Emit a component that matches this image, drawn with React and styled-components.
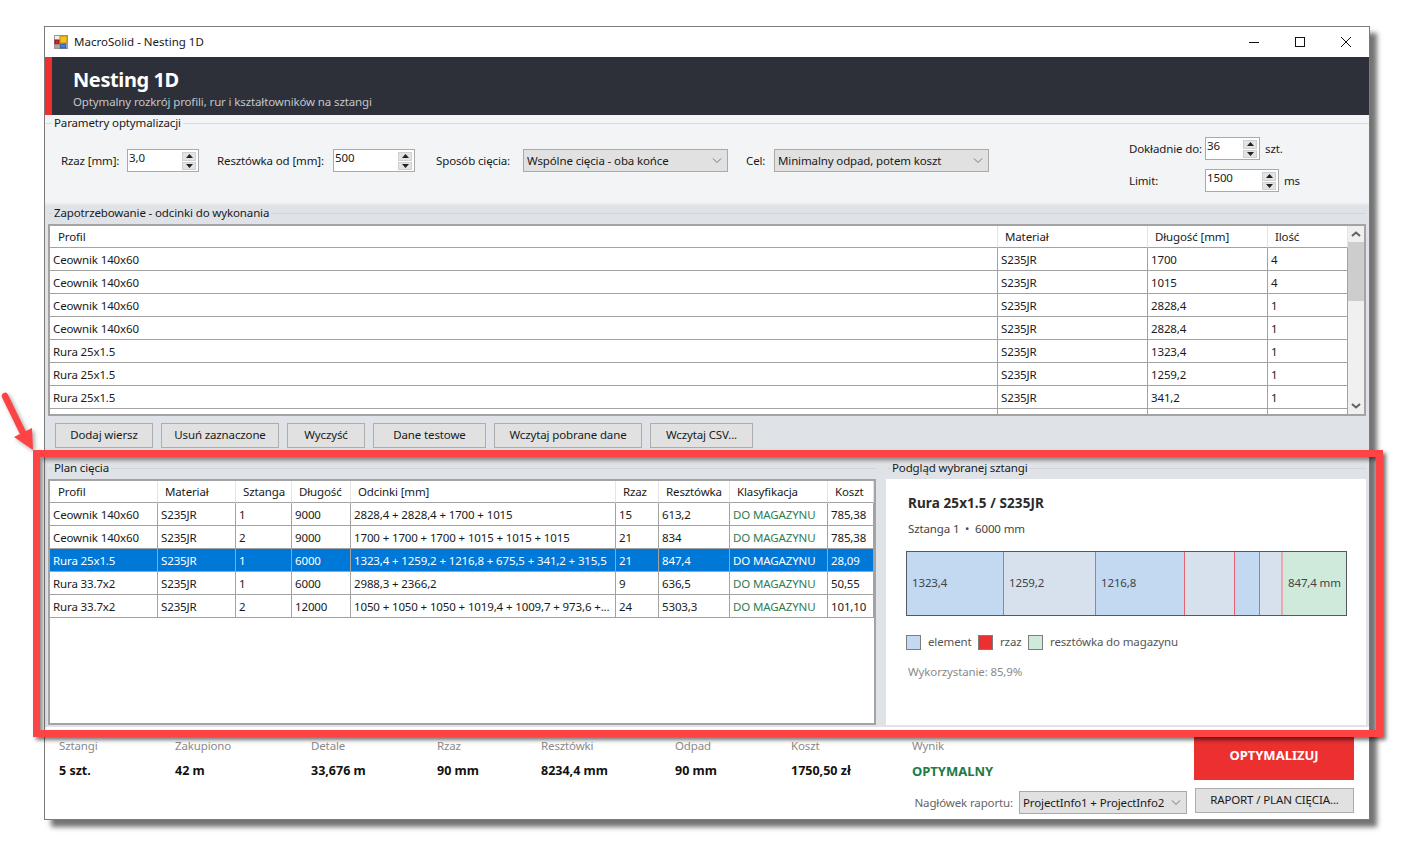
import React from 'react';
import styled, { createGlobalStyle } from 'styled-components';

const FONT = '"Noto Sans", "Open Sans", sans-serif';

const GlobalStyle = createGlobalStyle`
  html, body {
    margin: 0;
    padding: 0;
    background: #ffffff;
    overflow: hidden;
  }
  * {
    box-sizing: border-box;
  }
`;

const Page = styled.div`
  position: relative;
  width: 1410px;
  height: 848px;
  padding: 26px 0 0 44px;
  font-family: ${FONT};
  font-size: 11.5px;
  line-height: 16px;
  letter-spacing: -0.13px;
  color: #1a1a1a;
`;

const Win = styled.div`
  width: 1326px;
  height: 794px;
  display: flex;
  flex-direction: column;
  background: #ffffff;
  border: 1px solid #7b7b7b;
  box-shadow: 7px 7px 5px rgba(0, 0, 0, 0.55);
`;

const TitleBar = styled.div`
  height: 30px;
  flex: none;
  display: flex;
  align-items: center;
  padding-left: 9px;
  background: #ffffff;
`;

const TitleText = styled.span`
  margin-left: 6px;
  font-size: 11.5px;
  letter-spacing: 0;
  flex: 1;
`;

const WinButton = styled.div`
  width: 46px;
  height: 30px;
  display: flex;
  align-items: center;
  justify-content: center;
`;

const Banner = styled.div`
  height: 58px;
  flex: none;
  display: flex;
  flex-direction: column;
  padding: 10px 0 0 21px;
  background: #2d3038;
  border-left: 7px solid #ee3030;
`;

const BannerTitle = styled.div`
  font-size: 20px;
  line-height: 26px;
  font-weight: 700;
  letter-spacing: -0.4px;
  color: #ffffff;
`;

const BannerSub = styled.div`
  font-size: 11.5px;
  line-height: 16px;
  margin-top: 1px;
  color: #c3c6cb;
`;

const GroupHead = styled.div`
  height: 16px;
  display: flex;
  align-items: center;
  gap: 2px;
  padding-left: 1px;
  &::before {
    content: '';
    width: ${(p) => p.$lead}px;
    border-top: 1px solid ${(p) => p.$line};
  }
  &::after {
    content: '';
    flex: 1;
    border-top: 1px solid ${(p) => p.$line};
  }
`;

const Params = styled.section`
  height: 90px;
  flex: none;
  background: #f3f4f6;
  border-bottom: 2px solid #e9ebee;
`;

const ParamBody = styled.div`
  display: flex;
  align-items: flex-start;
`;

const ParamRow = styled.div`
  display: flex;
  align-items: center;
  margin: 18px 0 0 16px;
`;

const ParamLabel = styled.span`
  width: ${(p) => p.$w}px;
  margin-left: ${(p) => p.$ml || 0}px;
  flex: none;
  white-space: nowrap;
`;

const ParamSide = styled.div`
  margin: 6px 0 0 140px;
  display: flex;
  flex-direction: column;
  gap: 9px;
`;

const SideRow = styled.div`
  display: flex;
  align-items: center;
`;

const Unit = styled.span`
  margin-left: 5px;
`;

const SpinBox = styled.div`
  width: ${(p) => p.$w}px;
  height: 23px;
  flex: none;
  display: flex;
  justify-content: space-between;
  padding: 0 2px 1px 1px;
  background: #ffffff;
  border: 1px solid #a9a9a9;
  line-height: 15px;
`;

const SpinButtons = styled.div`
  width: 14px;
  display: flex;
  flex-direction: column;
  gap: 1px;
  margin: 2px 0 0;
`;

const SpinStep = styled.div`
  flex: 1;
  display: flex;
  align-items: center;
  justify-content: center;
  background: #e3e3e3;
  border: 1px solid #cfcfcf;
`;

const Combo = styled.div`
  width: ${(p) => p.$w}px;
  height: 23px;
  flex: none;
  display: flex;
  align-items: center;
  justify-content: space-between;
  padding: 0 4px 0 3px;
  background: #e1e1e1;
  border: 1px solid #a9a9a9;
  white-space: nowrap;
`;

const Demand = styled.section`
  height: 246px;
  flex: none;
  padding: 0 3px;
  background: #dfe2e6;
`;

const Frame = styled.div`
  height: ${(p) => p.$h}px;
  margin-top: 3px;
  display: flex;
  overflow: hidden;
  background: #ffffff;
  border: 2px solid #a3a3a3;
`;

const GridTable = styled.table`
  width: ${(p) => p.$w}px;
  flex: none;
  align-self: flex-start;
  table-layout: fixed;
  border-collapse: separate;
  border-spacing: 0;
  font-size: 11.5px;
`;

const HeadCell = styled.th`
  height: 22px;
  padding: 0 0 0 7px;
  font-weight: 400;
  text-align: left;
  white-space: nowrap;
  overflow: hidden;
  background: #ffffff;
  border-right: 1px solid #e4e4e4;
  border-bottom: 1px solid #a3a3a3;
  &:first-child {
    padding-left: 8px;
  }
`;

const Cell = styled.td`
  height: 23px;
  padding: 1px 0 0 3px;
  white-space: nowrap;
  overflow: hidden;
  background: ${(p) => (p.$selected ? '#0078d7' : '#ffffff')};
  color: ${(p) => (p.$selected ? '#ffffff' : p.$green ? '#2f7d52' : '#1a1a1a')};
  border-right: 1px solid #a3a3a3;
  border-bottom: 1px solid #a3a3a3;
`;

const ScrollBar = styled.div`
  flex: 1;
  display: flex;
  flex-direction: column;
  align-items: center;
  justify-content: space-between;
  background: #f0f0f0;
`;

const ScrollStep = styled.div`
  width: 100%;
  height: 16px;
  flex: none;
  display: flex;
  align-items: center;
  justify-content: center;
`;

const ScrollThumb = styled.div`
  width: 100%;
  height: 59px;
  flex: none;
  background: #cdcdcd;
`;

const ScrollRest = styled.div`
  flex: 1;
`;

const ButtonRow = styled.div`
  display: flex;
  gap: 8px;
  margin: 7px 0 0 7px;
`;

const Btn = styled.button`
  width: ${(p) => p.$w}px;
  height: 25px;
  padding: 0 0 2px;
  font-family: inherit;
  font-size: 11.5px;
  letter-spacing: inherit;
  color: #1a1a1a;
  background: #e1e1e1;
  border: 1px solid #adadad;
`;

const Plan = styled.section`
  height: 276px;
  flex: none;
  display: flex;
  padding-top: 9px;
  background: #dfe2e6;
`;

const PlanGroup = styled.div`
  width: 836px;
  flex: none;
  padding: 0 5px 0 3px;
`;

const PreviewGroup = styled.div`
  flex: 1;
  padding: 0 3px 0 5px;
`;

const PreviewPanel = styled.div`
  height: 246px;
  margin-top: 3px;
  padding: 15px 0 0 20px;
  background: #ffffff;
`;

const PreviewTitle = styled.div`
  margin-left: 2px;
  font-size: 13.5px;
  line-height: 18px;
  font-weight: 700;
  letter-spacing: 0.1px;
  color: #2b2b2b;
`;

const PreviewSub = styled.div`
  margin: 9px 0 0 2px;
  color: #444444;
`;

const Bar = styled.div`
  width: 441px;
  height: 65px;
  margin-top: 14px;
  display: flex;
  border: 1px solid #55585e;
`;

const Segment = styled.div`
  flex: ${(p) => (p.$fill ? '1' : 'none')};
  padding: 0 0 2px 5px;
  display: flex;
  align-items: center;
  white-space: nowrap;
  overflow: hidden;
  color: #444444;
  background: ${(p) => p.$bg};
  border-right: ${(p) => p.$cut || 'none'};
`;

const Legend = styled.div`
  display: flex;
  align-items: center;
  margin-top: 18px;
  color: #555555;
`;

const Swatch = styled.span`
  width: 15px;
  height: 15px;
  margin: 0 7px 0 ${(p) => p.$ml || 0}px;
  flex: none;
  background: ${(p) => p.$bg};
  border: 1px solid #7d7d7d;
`;

const LegendText = styled.span`
  width: ${(p) => p.$w}px;
  flex: none;
  white-space: nowrap;
`;

const Usage = styled.div`
  margin: 14px 0 0 2px;
  color: #8a8a8a;
`;

const Footer = styled.footer`
  flex: 1;
  display: flex;
  flex-direction: column;
  padding: 3px 15px 0 14px;
  background: #ffffff;
`;

const FooterTop = styled.div`
  display: flex;
  justify-content: space-between;
`;

const Stats = styled.div`
  display: flex;
  padding-top: 8px;
`;

const Stat = styled.div`
  width: ${(p) => p.$w}px;
  flex: none;
`;

const StatLabel = styled.div`
  color: #8a8a8a;
`;

const StatValue = styled.div`
  margin-top: 9px;
  font-size: ${(p) => (p.$green ? '13px' : '12.5px')};
  font-weight: 700;
  letter-spacing: 0;
  color: ${(p) => (p.$green ? '#217a45' : '#111111')};
`;

const Optimize = styled.button`
  width: 160px;
  height: 50px;
  padding: 0;
  font-family: inherit;
  font-size: 13px;
  font-weight: 700;
  color: #ffffff;
  background: #ec3030;
  border: none;
`;

const FooterBottom = styled.div`
  display: flex;
  justify-content: flex-end;
  align-items: flex-start;
  margin-top: 8px;
`;

const ReportLabel = styled.span`
  margin: 7px 6px 0 0;
  color: #666666;
`;

const ReportCombo = styled(Combo)`
  margin: 3px 8px 0 0;
`;

const Annotation = styled.div`
  position: absolute;
  left: 33px;
  top: 450px;
  width: 1350px;
  height: 287px;
  border: 7px solid #fd4343;
  box-shadow: 3px 3px 4px rgba(0, 0, 0, 0.55), inset 3px 3px 4px rgba(0, 0, 0, 0.45);
  pointer-events: none;
`;

const ArrowMark = styled.svg`
  position: absolute;
  left: 0;
  top: 385px;
  filter: drop-shadow(2px 2px 2px rgba(0, 0, 0, 0.35));
`;

const demandCols = [
  ['Profil', 948],
  ['Materiał', 150],
  ['Długość [mm]', 120],
  ['Ilość', 80],
];

const demandRows = [
  ['Ceownik 140x60', 'S235JR', '1700', '4'],
  ['Ceownik 140x60', 'S235JR', '1015', '4'],
  ['Ceownik 140x60', 'S235JR', '2828,4', '1'],
  ['Ceownik 140x60', 'S235JR', '2828,4', '1'],
  ['Rura 25x1.5', 'S235JR', '1323,4', '1'],
  ['Rura 25x1.5', 'S235JR', '1259,2', '1'],
  ['Rura 25x1.5', 'S235JR', '341,2', '1'],
  ['', '', '', ''],
];

const planCols = [
  ['Profil', 108],
  ['Materiał', 78],
  ['Sztanga', 56],
  ['Długość', 59],
  ['Odcinki [mm]', 265],
  ['Rzaz', 43],
  ['Resztówka', 71],
  ['Klasyfikacja', 98],
  ['Koszt', 46],
];

const planRows = [
  ['Ceownik 140x60', 'S235JR', '1', '9000', '2828,4 + 2828,4 + 1700 + 1015', '15', '613,2', 'DO MAGAZYNU', '785,38'],
  ['Ceownik 140x60', 'S235JR', '2', '9000', '1700 + 1700 + 1700 + 1015 + 1015 + 1015', '21', '834', 'DO MAGAZYNU', '785,38'],
  ['Rura 25x1.5', 'S235JR', '1', '6000', '1323,4 + 1259,2 + 1216,8 + 675,5 + 341,2 + 315,5', '21', '847,4', 'DO MAGAZYNU', '28,09'],
  ['Rura 33.7x2', 'S235JR', '1', '6000', '2988,3 + 2366,2', '9', '636,5', 'DO MAGAZYNU', '50,55'],
  ['Rura 33.7x2', 'S235JR', '2', '12000', '1050 + 1050 + 1050 + 1019,4 + 1009,7 + 973,6 +...', '24', '5303,3', 'DO MAGAZYNU', '101,10'],
];

const CUT = '1px solid #e5636e';
const BAR_WIDTH = 439;
const BAR_LENGTH = 5999;
const KERF = 3;

const segments = [
  { len: 1323.4, label: '1323,4', bg: '#c2d9f1', cut: CUT },
  { len: 1259.2, label: '1259,2', bg: '#d6e1ed', cut: CUT },
  { len: 1216.8, label: '1216,8', bg: '#c2d9f1', cut: CUT },
  { len: 675.5, label: '', bg: '#d6e1ed', cut: CUT },
  { len: 341.2, label: '', bg: '#c2d9f1', cut: CUT },
  { len: 315.5, label: '', bg: '#d6e1ed', cut: '2px solid #e8a9af' },
  { len: 847.4, label: '847,4 mm', bg: '#cfeada', fill: true },
];

const stats = [
  ['Sztangi', '5 szt.', 116],
  ['Zakupiono', '42 m', 136],
  ['Detale', '33,676 m', 126],
  ['Rzaz', '90 mm', 104],
  ['Resztówki', '8234,4 mm', 134],
  ['Odpad', '90 mm', 116],
  ['Koszt', '1750,50 zł', 121],
];

const Chevron = () => (
  <svg width="12" height="7" viewBox="0 0 12 7">
    <path d="M2 1.5 L6 5.5 L10 1.5" fill="none" stroke="#777777" strokeWidth="1" />
  </svg>
);

const Spin = ({ value, w }) => (
  <SpinBox $w={w}>
    <span>{value}</span>
    <SpinButtons>
      <SpinStep>
        <svg width="7" height="4" viewBox="0 0 7 4">
          <path d="M3.5 0 L7 4 L0 4 Z" fill="#222222" />
        </svg>
      </SpinStep>
      <SpinStep>
        <svg width="7" height="4" viewBox="0 0 7 4">
          <path d="M0 0 L7 0 L3.5 4 Z" fill="#222222" />
        </svg>
      </SpinStep>
    </SpinButtons>
  </SpinBox>
);

const AppIcon = () => (
  <svg width="14" height="14" viewBox="0 0 14 14">
    <rect x="0.5" y="0.5" width="13" height="13" fill="#f0eeea" stroke="#9a9a9a" />
    <rect x="6" y="1" width="7" height="7" fill="#f5c020" stroke="#b98a10" />
    <rect x="1" y="5" width="4" height="4" fill="#d42a20" stroke="#8a1a14" />
    <rect x="6" y="9" width="6" height="4" fill="#4a80d8" stroke="#2a55a0" />
    <rect x="1" y="10" width="4" height="3" fill="#a8a8a8" />
  </svg>
);

const Grid = ({ cols, rows, width, selected }) => (
  <GridTable $w={width}>
    <colgroup>
      {cols.map(([name, w]) => (
        <col key={name} width={w} />
      ))}
    </colgroup>
    <thead>
      <tr>
        {cols.map(([name]) => (
          <HeadCell key={name}>{name}</HeadCell>
        ))}
      </tr>
    </thead>
    <tbody>
      {rows.map((row, i) => (
        <tr key={i}>
          {row.map((value, j) => (
            <Cell key={j} $selected={i === selected} $green={value === 'DO MAGAZYNU'}>
              {value}
            </Cell>
          ))}
        </tr>
      ))}
    </tbody>
  </GridTable>
);

export default function App() {
  return (
    <Page>
      <GlobalStyle />
      <Win>
        <TitleBar>
          <AppIcon />
          <TitleText>MacroSolid - Nesting 1D</TitleText>
          <WinButton>
            <svg width="10" height="10" viewBox="0 0 10 10">
              <path d="M0 5.5 H10" stroke="#111111" strokeWidth="1" />
            </svg>
          </WinButton>
          <WinButton>
            <svg width="10" height="10" viewBox="0 0 10 10">
              <rect x="0.5" y="0.5" width="9" height="9" fill="none" stroke="#111111" strokeWidth="1" />
            </svg>
          </WinButton>
          <WinButton>
            <svg width="10" height="10" viewBox="0 0 10 10">
              <path d="M0 0 L10 10 M10 0 L0 10" stroke="#111111" strokeWidth="1" />
            </svg>
          </WinButton>
        </TitleBar>

        <Banner>
          <BannerTitle>Nesting 1D</BannerTitle>
          <BannerSub>Optymalny rozkrój profili, rur i kształtowników na sztangi</BannerSub>
        </Banner>

        <Params>
          <GroupHead $line="#d9dbde" $lead={6}>Parametry optymalizacji</GroupHead>
          <ParamBody>
            <ParamRow>
              <ParamLabel $w={66}>Rzaz [mm]:</ParamLabel>
              <Spin value="3,0" w={72} />
              <ParamLabel $w={116} $ml={18}>Resztówka od [mm]:</ParamLabel>
              <Spin value="500" w={82} />
              <ParamLabel $w={87} $ml={21}>Sposób cięcia:</ParamLabel>
              <Combo $w={205}>
                Wspólne cięcia - oba końce
                <Chevron />
              </Combo>
              <ParamLabel $w={28} $ml={18}>Cel:</ParamLabel>
              <Combo $w={215}>
                Minimalny odpad, potem koszt
                <Chevron />
              </Combo>
            </ParamRow>
            <ParamSide>
              <SideRow>
                <ParamLabel $w={76}>Dokładnie do:</ParamLabel>
                <Spin value="36" w={55} />
                <Unit>szt.</Unit>
              </SideRow>
              <SideRow>
                <ParamLabel $w={76}>Limit:</ParamLabel>
                <Spin value="1500" w={74} />
                <Unit>ms</Unit>
              </SideRow>
            </ParamSide>
          </ParamBody>
        </Params>

        <Demand>
          <GroupHead $line="#d2d5da" $lead={3}>Zapotrzebowanie - odcinki do wykonania</GroupHead>
          <Frame $h={192}>
            <Grid cols={demandCols} rows={demandRows} width={1298} />
            <ScrollBar>
              <ScrollStep>
                <svg width="10" height="6" viewBox="0 0 10 6">
                  <path d="M1 5 L5 1.5 L9 5" fill="none" stroke="#606060" strokeWidth="2" />
                </svg>
              </ScrollStep>
              <ScrollThumb />
              <ScrollRest />
              <ScrollStep>
                <svg width="10" height="6" viewBox="0 0 10 6">
                  <path d="M1 1 L5 4.5 L9 1" fill="none" stroke="#606060" strokeWidth="2" />
                </svg>
              </ScrollStep>
            </ScrollBar>
          </Frame>
          <ButtonRow>
            <Btn $w={98}>Dodaj wiersz</Btn>
            <Btn $w={118}>Usuń zaznaczone</Btn>
            <Btn $w={78}>Wyczyść</Btn>
            <Btn $w={113}>Dane testowe</Btn>
            <Btn $w={148}>Wczytaj pobrane dane</Btn>
            <Btn $w={103}>Wczytaj CSV...</Btn>
          </ButtonRow>
        </Demand>

        <Plan>
          <PlanGroup>
            <GroupHead $line="#d2d5da" $lead={3}>Plan cięcia</GroupHead>
            <Frame $h={246}>
              <Grid cols={planCols} rows={planRows} width={824} selected={2} />
            </Frame>
          </PlanGroup>
          <PreviewGroup>
            <GroupHead $line="#d2d5da" $lead={3}>Podgląd wybranej sztangi</GroupHead>
            <PreviewPanel>
              <PreviewTitle>Rura 25x1.5 / S235JR</PreviewTitle>
              <PreviewSub>Sztanga 1 &nbsp;•&nbsp; 6000 mm</PreviewSub>
              <Bar>
                {segments.map((s, i) => (
                  <Segment
                    key={i}
                    $bg={s.bg}
                    $cut={s.cut}
                    $fill={s.fill}
                    style={s.fill ? undefined : { width: `${Math.round(((s.len + KERF) / BAR_LENGTH) * BAR_WIDTH)}px` }}
                  >
                    {s.label}
                  </Segment>
                ))}
              </Bar>
              <Legend>
                <Swatch $bg="#c2d9f1" />
                <LegendText $w={50}>element</LegendText>
                <Swatch $bg="#ec3030" />
                <LegendText $w={28}>rzaz</LegendText>
                <Swatch $bg="#cfeada" />
                <LegendText $w={140}>resztówka do magazynu</LegendText>
              </Legend>
              <Usage>Wykorzystanie: 85,9%</Usage>
            </PreviewPanel>
          </PreviewGroup>
        </Plan>

        <Footer>
          <FooterTop>
            <Stats>
              {stats.map(([label, value, w]) => (
                <Stat key={label} $w={w}>
                  <StatLabel>{label}</StatLabel>
                  <StatValue>{value}</StatValue>
                </Stat>
              ))}
              <Stat $w={120}>
                <StatLabel>Wynik</StatLabel>
                <StatValue $green>OPTYMALNY</StatValue>
              </Stat>
            </Stats>
            <Optimize>OPTYMALIZUJ</Optimize>
          </FooterTop>
          <FooterBottom>
            <ReportLabel>Nagłówek raportu:</ReportLabel>
            <ReportCombo $w={168}>
              ProjectInfo1 + ProjectInfo2
              <Chevron />
            </ReportCombo>
            <Btn $w={159}>RAPORT / PLAN CIĘCIA...</Btn>
          </FooterBottom>
        </Footer>
      </Win>

      <ArrowMark width="40" height="70" viewBox="0 0 40 70">
        <path d="M5 11 L24 50" stroke="#fd4343" strokeWidth="6.5" strokeLinecap="round" />
        <path d="M14 52 L32 43 L33 65 Z" fill="#fd4343" />
      </ArrowMark>
      <Annotation />
    </Page>
  );
}
